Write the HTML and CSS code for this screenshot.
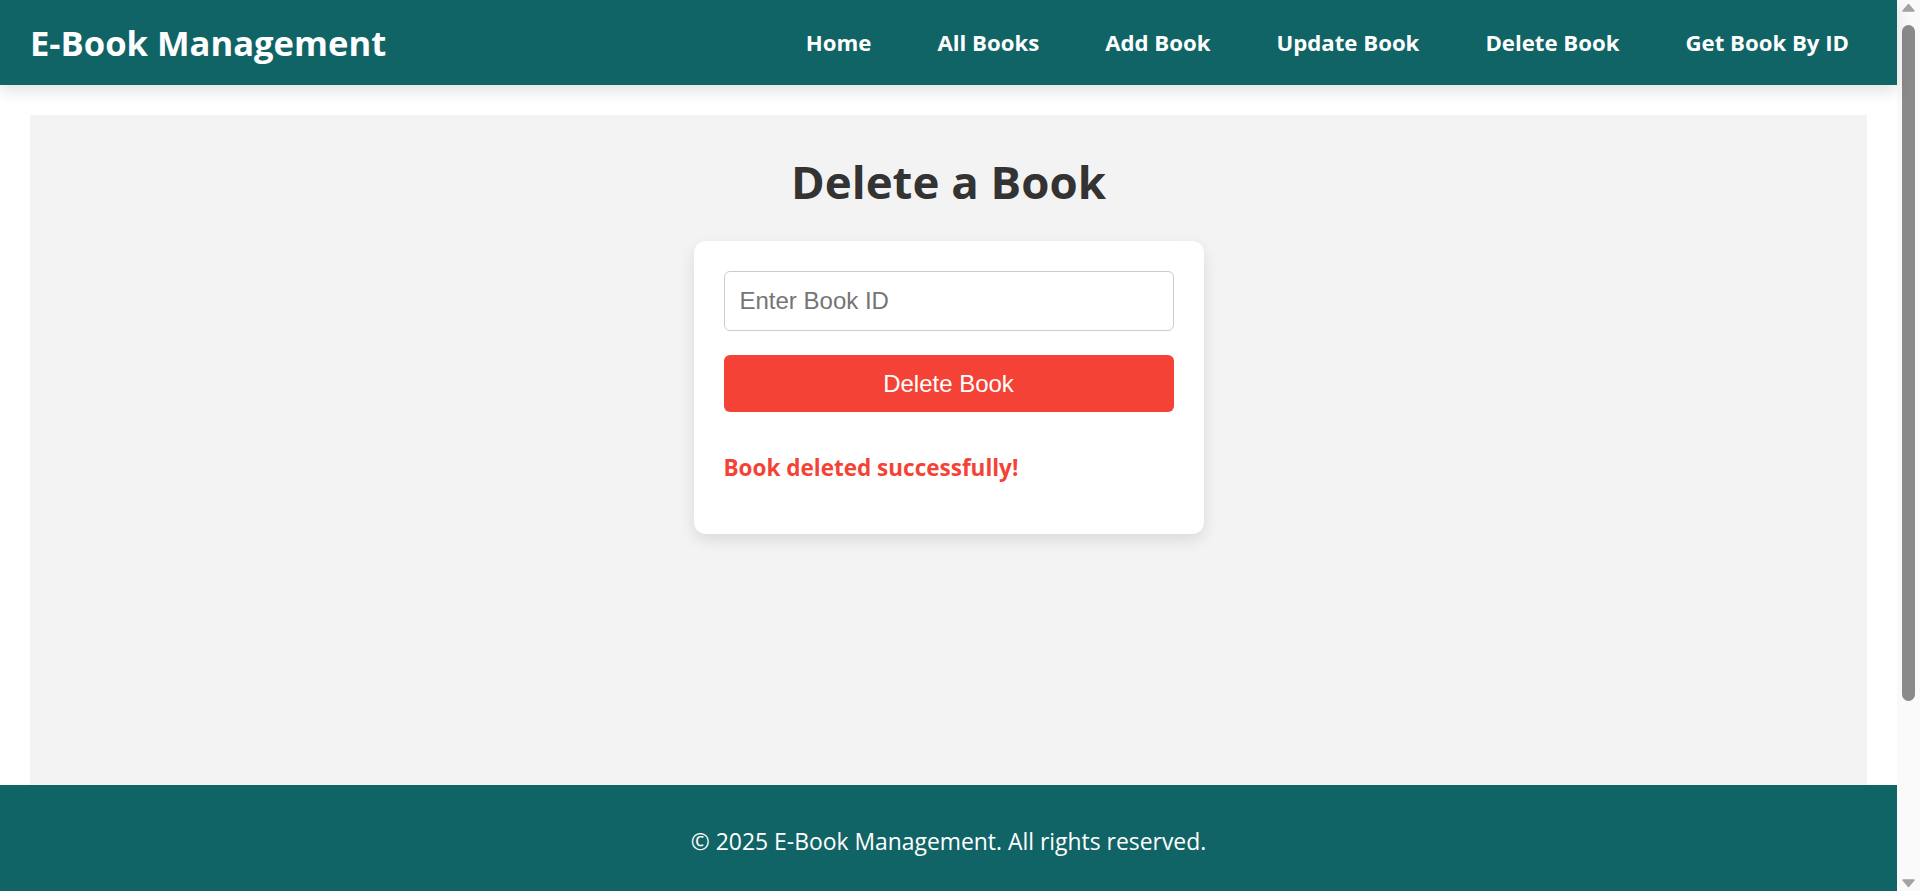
FILE: index.html
```html
<!DOCTYPE html>
<html lang="en">
<head>
<meta charset="utf-8">
<title>E-Book Management</title>
<link rel="stylesheet" href="styles.css">
</head>
<body>
<div class="page">
  <header class="topbar">
    <div class="brand">E-Book Management</div>
    <nav class="nav">
      <a href="#">Home</a>
      <a href="#">All Books</a>
      <a href="#">Add Book</a>
      <a href="#">Update Book</a>
      <a href="#">Delete Book</a>
      <a href="#">Get Book By ID</a>
    </nav>
  </header>
  <main class="main">
    <h2 class="title">Delete a Book</h2>
    <div class="card">
      <input class="field" type="text" placeholder="Enter Book ID">
      <button class="btn" type="button">Delete Book</button>
      <p class="msg">Book deleted successfully!</p>
    </div>
  </main>
  <footer class="footer">
    <p>© 2025 E-Book Management. All rights reserved.</p>
  </footer>
</div>
<div class="scrollbar" aria-hidden="true">
  <svg class="arrow" width="23" height="20" viewBox="0 0 23 20"><path d="M6 11 L11.5 4.5 L17 11 Z" fill="#a3a3a3" stroke="#a3a3a3" stroke-width="1.5" stroke-linejoin="round"/></svg>
  <div class="track"><div class="thumb"></div></div>
  <svg class="arrow" width="23" height="20" viewBox="0 0 23 20"><path d="M6 9 L11.5 15.5 L17 9 Z" fill="#a3a3a3" stroke="#a3a3a3" stroke-width="1.5" stroke-linejoin="round"/></svg>
</div>
</body>
</html>
```

FILE: styles.css
```css
html, body {
  margin: 0;
  padding: 0;
  background: #ffffff;
}
body {
  font-family: "Open Sans", "Noto Sans", sans-serif;
  color: #333333;
  display: flex;
  align-items: flex-start;
}
.page {
  flex: 1;
  min-width: 0;
}
.scrollbar {
  position: sticky;
  top: 0;
  width: 23px;
  height: 100vh;
  flex: none;
  background: #fafafa;
  display: flex;
  flex-direction: column;
}
.arrow {
  display: block;
  flex: none;
}
.track {
  flex: 1;
  padding: 5px 0 0 0;
  display: flex;
  justify-content: center;
}
.thumb {
  width: 13px;
  height: 676px;
  border-radius: 7px;
  background: #8a8a8a;
}
.topbar {
  height: 85px;
  background: #116466;
  display: flex;
  align-items: center;
  justify-content: space-between;
  padding: 0 48px 0 30px;
  box-shadow: 0 6px 15px rgba(0, 0, 0, 0.12);
  position: relative;
  z-index: 1;
}
.brand {
  color: #ffffff;
  font-size: 34.6px;
  font-weight: 700;
  line-height: 48px;
}
.nav {
  display: flex;
  gap: 66px;
}
.nav a {
  color: #ffffff;
  text-decoration: none;
  font-size: 22.2px;
  font-weight: 700;
  line-height: 32px;
}
.main {
  margin: 30px 30px 0 30px;
  background: #f3f3f3;
  height: 670px;
  box-sizing: border-box;
  padding-top: 34px;
  display: flex;
  flex-direction: column;
  align-items: center;
}
.title {
  margin: 0 0 28px 0;
  font-size: 45.6px;
  line-height: 64px;
  font-weight: 700;
  color: #333333;
}
.card {
  width: 450px;
  background: #ffffff;
  padding: 30px;
  border-radius: 12px;
  box-shadow: 0 6px 15px rgba(0, 0, 0, 0.1);
  display: flex;
  flex-direction: column;
}
.field {
  box-sizing: border-box;
  width: 100%;
  height: 60px;
  padding: 15px;
  border: 1px solid #cccccc;
  border-radius: 6px;
  font-family: "Liberation Sans", Arial, sans-serif;
  font-size: 24px;
  color: #333333;
  outline: none;
  margin: 0 0 24px 0;
}
.field::placeholder { color: #757575; }
.btn {
  width: 100%;
  height: 57px;
  border: none;
  border-radius: 6px;
  background: #f44336;
  color: #ffffff;
  font-family: "Liberation Sans", Arial, sans-serif;
  font-size: 24px;
  margin: 0 0 12px 0;
  cursor: pointer;
}
.msg {
  margin: 28px 0 20px 0;
  font-size: 22.5px;
  line-height: 32px;
  font-weight: 700;
  color: #f44336;
}
.footer {
  background: #116466;
  color: #ffffff;
  text-align: center;
  padding: 41px 0 271px 0;
}
.footer p {
  margin: 0;
  font-size: 22.9px;
  line-height: 32px;
}
```
